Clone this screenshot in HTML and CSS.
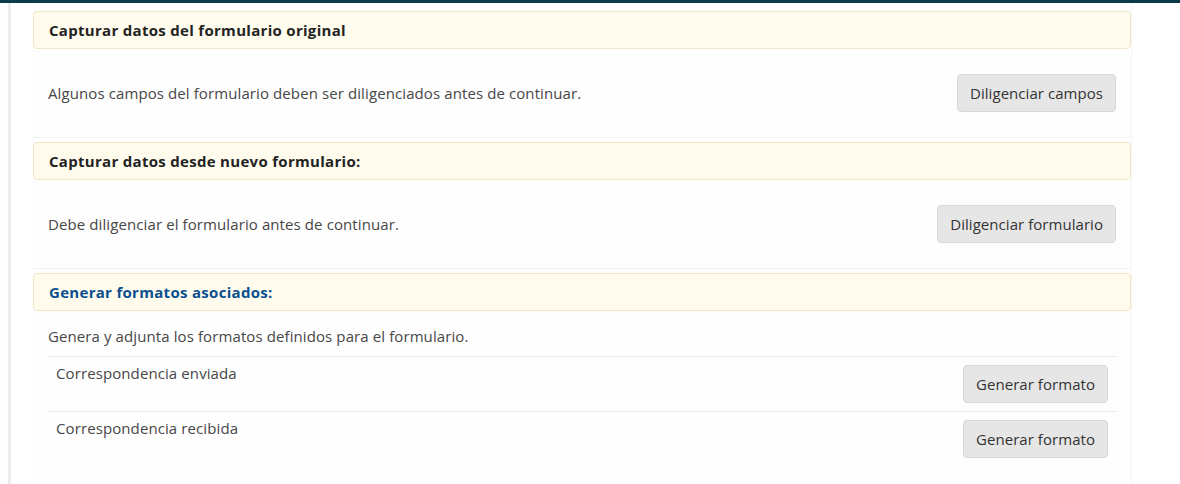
FILE: index.html
```html
<!DOCTYPE html>
<html lang="es">
<head>
<meta charset="utf-8">
<title>Formulario</title>
<link rel="stylesheet" href="styles.css">
</head>
<body>
<div class="topbar"></div>
<div class="layout">
  <div class="rail"></div>
  <main class="main">
    <div class="panel">
      <section class="section">
        <div class="section-head">Capturar datos del formulario original</div>
        <div class="section-body center">
          <span class="text">Algunos campos del formulario deben ser diligenciados antes de continuar.</span>
          <button class="btn">Diligenciar campos</button>
        </div>
      </section>
      <section class="section">
        <div class="section-head">Capturar datos desde nuevo formulario:</div>
        <div class="section-body center">
          <span class="text">Debe diligenciar el formulario antes de continuar.</span>
          <button class="btn">Diligenciar formulario</button>
        </div>
      </section>
      <section class="section">
        <div class="section-head blue">Generar formatos asociados:</div>
        <div class="section-body list">
          <div class="intro text">Genera y adjunta los formatos definidos para el formulario.</div>
          <div class="row">
            <span class="text">Correspondencia enviada</span>
            <button class="btn">Generar formato</button>
          </div>
          <div class="row">
            <span class="text">Correspondencia recibida</span>
            <button class="btn">Generar formato</button>
          </div>
        </div>
      </section>
    </div>
  </main>
</div>
</body>
</html>
```

FILE: styles.css
```css
* { box-sizing: border-box; }
html, body { margin: 0; padding: 0; background: #ffffff; }
body {
  font-family: "Open Sans", "Liberation Sans", sans-serif;
  color: #444;
  font-size: 15px;
  height: 484px;
  overflow: hidden;
}
.topbar { height: 3px; background: #0d3a4a; }
.layout { display: flex; height: 481px; }
.rail {
  width: 11px;
  background: #fdfdfd;
  border-right: 3px solid #ececec;
  flex: none;
}
.main { flex: 1; padding-left: 22px; }
.panel {
  width: 1099px;
  background: #fefefe;
  border-right: 1px solid #f4f4f4;
  padding-top: 8px;
  min-height: 100%;
}
.section { border-bottom: 1px solid #f3f3f3; margin-bottom: 4px; }
.section-head {
  height: 38px;
  display: flex;
  align-items: center;
  padding: 0 15px 1px;
  background: #fffcee;
  border: 1px solid #efe6c6;
  border-radius: 4px;
  font-weight: 700;
  font-size: 15px;
  letter-spacing: 0.3px;
  color: #232323;
}
.section-head.blue { color: #0b4f8f; }
.section-body { padding: 0 15px; }
.section-body.center {
  display: flex;
  align-items: center;
  justify-content: space-between;
  height: 88px;
}
.text { color: #474747; font-size: 15px; letter-spacing: 0.1px; line-height: 20px; }
.btn {
  font-family: inherit;
  font-size: 15px;
  letter-spacing: 0.05px;
  color: #333;
  background: #e6e6e6;
  border: 1px solid #d8d8d8;
  border-radius: 4px;
  height: 38px;
  padding: 0 12px 1px;
  cursor: pointer;
}
.list { padding-top: 15px; padding-bottom: 20px; }
.intro { padding-bottom: 10px; }
.row {
  display: flex;
  justify-content: space-between;
  align-items: flex-start;
  border-top: 1px solid #e9e9e9;
  padding: 8px 8px;
}
.row .text { line-height: 16px; }
```
